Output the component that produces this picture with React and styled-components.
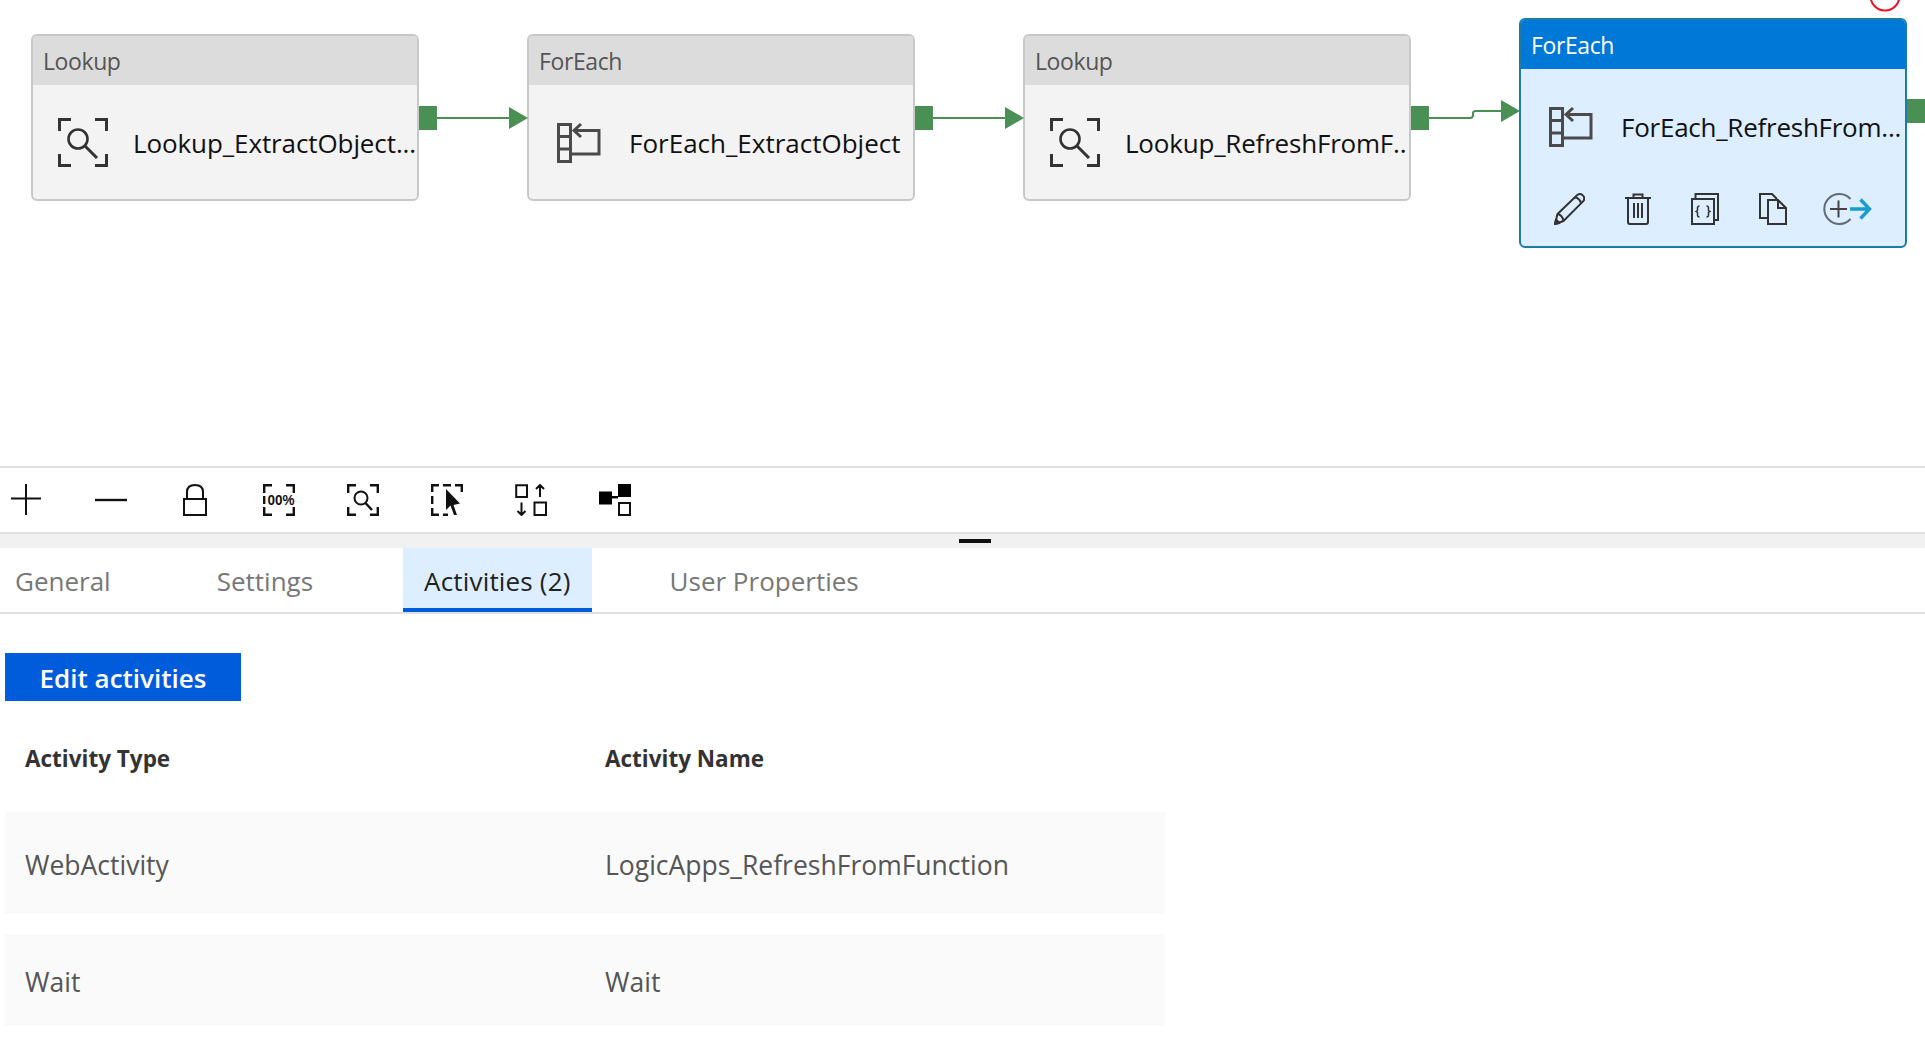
import React from "react";
import styled, { createGlobalStyle } from "styled-components";

const GlobalStyle = createGlobalStyle`
    html, body {
        margin: 0;
        padding: 0;
        background: #fff;
        overflow: hidden;
    }
    * {
        box-sizing: border-box;
    }
`
const Page = styled.div`
    width: 1925px;
    height: 1038px;
    overflow: hidden;
    font-family: "Open Sans", "Noto Sans", sans-serif;
    background: #fff;
`
const Canvas = styled.div`
    position: relative;
    height: 466px;
    overflow: hidden;
`
const ConnectorLayer = styled.svg`
    position: absolute;
    left: 0;
    top: 0;
`
const Node = styled.div`
    position: absolute;
    left: ${p => p.$x}px;
    top: ${p => p.$selected ? 18 : 34}px;
    width: 388px;
    height: ${p => p.$selected ? 230 : 167}px;
    border: 2px solid ${p => p.$selected ? "#1a7ea3" : "#c8c8c8"};
    border-radius: 6px;
    background: ${p => p.$selected ? "#dceeff" : "#f3f3f3"};
    overflow: hidden;
`
const NodeHeader = styled.div`
    height: 49px;
    padding: 0 10px;
    display: flex;
    align-items: center;
    font-size: 23px;
    letter-spacing: -0.4px;
    color: ${p => p.$selected ? "#fff" : "#555"};
    background: ${p => p.$selected ? "#0078d7" : "#dcdcdc"};
`
const NameRow = styled.div`
    height: 116px;
    display: flex;
    align-items: center;
`
const IconSlot = styled.div`
    flex: none;
    width: 100px;
    padding-left: 25px;
    display: flex;
`
const NodeName = styled.div`
    flex: 1;
    min-width: 0;
    white-space: nowrap;
    overflow: hidden;
    font-size: 26px;
    letter-spacing: ${p => p.$tracking || 0}px;
    color: #111;
`
const ActionRow = styled.div`
    margin-top: 8px;
    padding-left: 33px;
    display: flex;
    gap: 40px;
`
const AddAction = styled.svg`
    margin-left: -4px;
`
const Toolbar = styled.div`
    height: 68px;
    padding-left: 11px;
    display: flex;
    align-items: center;
    gap: 52px;
    border-top: 2px solid #e0e0e0;
    border-bottom: 2px solid #e0e0e0;
`
const Splitter = styled.div`
    height: 14px;
    background: #f1f1f1;
    display: flex;
    align-items: center;
    justify-content: center;
`
const SplitterHandle = styled.div`
    width: 32px;
    height: 4px;
    background: #111;
    margin-left: 24px;
`
const TabBar = styled.div`
    height: 66px;
    margin-left: -6px;
    display: flex;
    gap: 66px;
    border-bottom: 2px solid #e0e0e0;
`
const Tab = styled.div`
    height: 64px;
    margin-left: ${p => p.$nudge || 0}px;
    padding: 5px 21px 0;
    display: flex;
    align-items: center;
    font-size: 26px;
    letter-spacing: ${p => p.$active ? 0.17 : 0}px;
    color: ${p => p.$active ? "#222" : "#777"};
    background: ${p => p.$active ? "#dceeff" : "transparent"};
    border-bottom: 4px solid ${p => p.$active ? "#005cdb" : "transparent"};
`
const Content = styled.div`
    padding-left: 5px;
`
const EditButton = styled.button`
    display: block;
    margin-top: 39px;
    width: 236px;
    height: 48px;
    padding: 2px 0 0;
    border: none;
    background: #005cdb;
    color: #fff;
    font-family: inherit;
    font-size: 26px;
    font-weight: 600;
    cursor: pointer;
`
const TableRow = styled.div`
    width: 1160px;
    height: ${p => p.$height}px;
    margin-top: ${p => p.$top}px;
    padding: ${p => p.$head ? 0 : 4}px 0 0 20px;
    display: grid;
    grid-template-columns: 580px 1fr;
    align-items: center;
    font-size: ${p => p.$head ? 22.5 : 26.5}px;
    font-weight: ${p => p.$head ? 700 : 400};
    color: ${p => p.$head ? "#333" : "#555"};
    background: ${p => p.$head ? "transparent" : "#fafafa"};
`

const LookupIcon = () => (
    <svg width="50" height="50" viewBox="0 0 50 50" fill="none" stroke="#333" strokeWidth="3">
        <path d="M1.5 13V1.5H13M37 1.5H48.5V13M1.5 36V47.5H13M37 47.5H48.5V36" />
        <circle cx="20" cy="21" r="9.5" strokeWidth="2.6" />
        <path d="M27 28L39 40" strokeWidth="3" />
    </svg>
)
const ForEachIcon = () => (
    <svg width="50" height="50" viewBox="0 0 50 50" fill="none" stroke="#4a4a4a" strokeWidth="3">
        <path d="M4.5 6.5H16.5V43.5H4.5ZM4.5 18.5H16.5M4.5 31H16.5M16.5 36H45V12.5H20" />
        <path d="M27 6L20 12.5L27 19" />
    </svg>
)
const PencilIcon = () => (
    <svg width="31" height="32" viewBox="0 0 31 32" fill="none" stroke="#333" strokeWidth="2" strokeLinejoin="round">
        <path d="M1 31L3.5 21L23 2.2C25 0.6 27.5 1 29 2.6C30.6 4.4 30.6 6.6 29 8.4L9.5 28Z" />
        <path d="M3.5 21C6.5 21.5 8.8 24.3 9.5 28M21 4.5C23.8 5 26.5 7.5 27 10.5" />
        <path d="M1 31L2 26.5L5.5 30Z" fill="#333" />
    </svg>
)
const TrashIcon = () => (
    <svg width="26" height="32" viewBox="0 0 26 32" fill="none" stroke="#333" strokeWidth="2">
        <path d="M0 5H26M8.5 5V1.5H17.5V5M3 5V29Q3 31 5 31H21Q23 31 23 29V5" />
        <path d="M9 10V25M13 10V25M17 10V25" />
    </svg>
)
const JsonIcon = () => (
    <svg width="28" height="32" viewBox="0 0 28 32" fill="none" stroke="#333" strokeWidth="2">
        <path d="M1 6H23V31H1ZM4.5 6V1H27V27H23" />
        <path d="M8.5 13Q6.5 13 6.5 15V17.5L5 18.5L6.5 19.5V22Q6.5 24 8.5 24M15.5 13Q17.5 13 17.5 15V17.5L19 18.5L17.5 19.5V22Q17.5 24 15.5 24" strokeWidth="1.5" />
    </svg>
)
const CopyIcon = () => (
    <svg width="28" height="32" viewBox="0 0 28 32" fill="none" stroke="#333" strokeWidth="2">
        <path d="M9 25H1V1H13L18 6" />
        <path d="M9 7H19L27 15V31H9Z" fill="#dceeff" />
        <path d="M19 7V15H27" />
    </svg>
)
const AddIcon = () => (
    <AddAction width="49" height="32" viewBox="0 0 49 32" fill="none">
        <path d="M27.5 6A15 15 0 1 0 27.5 26" stroke="#636a75" strokeWidth="2" />
        <path d="M7 16H24M15.5 7.5V24.5" stroke="#444" strokeWidth="2" />
        <path d="M27 16H46M37.5 6.5L46.5 16L37.5 25.5" stroke="#1b9ccb" strokeWidth="3.4" />
    </AddAction>
)

const ToolIcon = ({ children }) => (
    <svg width="32" height="32" viewBox="0 0 32 32" fill="none" stroke="#111" strokeWidth="2.4">
        {children}
    </svg>
)
const corners = "M1.2 9V1.2H9M23 1.2H30.8V9M1.2 23V30.8H9M23 30.8H30.8V23"

const nodes = [
    { x: 31, type: "Lookup", name: "Lookup_ExtractObject...", icon: <LookupIcon />, tracking: -0.1 },
    { x: 527, type: "ForEach", name: "ForEach_ExtractObject", icon: <ForEachIcon /> },
    { x: 1023, type: "Lookup", name: "Lookup_RefreshFromF..", icon: <LookupIcon />, tracking: -0.2 },
    { x: 1519, type: "ForEach", name: "ForEach_RefreshFrom...", icon: <ForEachIcon />, tracking: -0.25, selected: true },
]

const App = () => {

    return(

        <Page>
            <GlobalStyle />
            <Canvas>
                {nodes.map(n => (
                    <Node key={n.x} $x={n.x} $selected={n.selected}>
                        <NodeHeader $selected={n.selected}>{n.type}</NodeHeader>
                        <NameRow>
                            <IconSlot>{n.icon}</IconSlot>
                            <NodeName $tracking={n.tracking}>{n.name}</NodeName>
                        </NameRow>
                        {n.selected && (
                            <ActionRow>
                                <PencilIcon />
                                <TrashIcon />
                                <JsonIcon />
                                <CopyIcon />
                                <AddIcon />
                            </ActionRow>
                        )}
                    </Node>
                ))}
                <ConnectorLayer width="1925" height="466" fill="none">
                    <g fill="#4a8f53" stroke="none">
                        <rect x="419" y="106" width="18" height="24" />
                        <rect x="437" y="117" width="74" height="2" />
                        <path d="M509 107L528 118L509 129Z" />
                        <rect x="915" y="106" width="18" height="24" />
                        <rect x="933" y="117" width="74" height="2" />
                        <path d="M1005 107L1024 118L1005 129Z" />
                        <rect x="1411" y="106" width="18" height="24" />
                        <path d="M1501 100L1520 111L1501 122Z" />
                        <rect x="1907" y="99" width="18" height="24" />
                    </g>
                    <path d="M1429 118H1470Q1473 118 1473 115V113Q1473 111 1476 111H1502" stroke="#4a8f53" strokeWidth="2" />
                    <circle cx="1885" cy="-4" r="14.5" stroke="#e81123" strokeWidth="2" />
                </ConnectorLayer>
            </Canvas>

            <Toolbar>
                <ToolIcon><path d="M0 14.5H30M15 0V31" strokeWidth="2" /></ToolIcon>
                <ToolIcon><path d="M0 16H32" /></ToolIcon>
                <ToolIcon><path d="M5 31V15H27V31ZM8 15V8Q8 1 16 1Q24 1 24 8V15" strokeWidth="2" /></ToolIcon>
                <ToolIcon>
                    <path d={corners} />
                    <path d="M1.2 12V20" />
                    <text x="4.5" y="20.5" fontFamily="'Liberation Sans', sans-serif" fontSize="14" fontWeight="700" fill="#111" stroke="none" textLength="27" lengthAdjust="spacingAndGlyphs">00%</text>
                </ToolIcon>
                <ToolIcon>
                    <path d={corners} />
                    <circle cx="14" cy="14" r="6.5" strokeWidth="2" />
                    <path d="M18.5 19L25 26" />
                </ToolIcon>
                <ToolIcon>
                    <path d="M1.2 8V1.2H8M12 1.2H20M24 1.2H30.8V8M1.2 12V20M1.2 24V30.8H8M12 30.8H17" />
                    <path d="M15 5V26L19.5 21.5L23 31H26L22.5 21L29 19.5Z" fill="#111" stroke="none" />
                </ToolIcon>
                <ToolIcon>
                    <path d="M1.2 1.2H12V13H1.2ZM19.5 18.5H31V31H19.5ZM25 13V1M21 5L25 1L29 5M6.5 18.5V31M2.5 27L6.5 31L10.5 27" strokeWidth="2" />
                </ToolIcon>
                <ToolIcon>
                    <g fill="#000" stroke="none">
                        <rect x="0" y="7.5" width="13" height="13" />
                        <rect x="19" y="0" width="13" height="13" />
                        <rect x="13" y="12" width="6" height="2.4" />
                    </g>
                    <path d="M20 19H31V31H20Z" strokeWidth="2" />
                </ToolIcon>
            </Toolbar>

            <Splitter>
                <SplitterHandle />
            </Splitter>

            <TabBar>
                <Tab>General</Tab>
                <Tab $nudge={-2}>Settings</Tab>
                <Tab $active $nudge={3}>Activities (2)</Tab>
                <Tab $nudge={-9}>User Properties</Tab>
            </TabBar>

            <Content>
                <EditButton>Edit activities</EditButton>
                <TableRow $head $top={32} $height={50}>
                    <div>Activity Type</div>
                    <div>Activity Name</div>
                </TableRow>
                <TableRow $top={29} $height={102}>
                    <div>WebActivity</div>
                    <div>LogicApps_RefreshFromFunction</div>
                </TableRow>
                <TableRow $top={20} $height={92}>
                    <div>Wait</div>
                    <div>Wait</div>
                </TableRow>
            </Content>
        </Page>

    )

}

export default App;
